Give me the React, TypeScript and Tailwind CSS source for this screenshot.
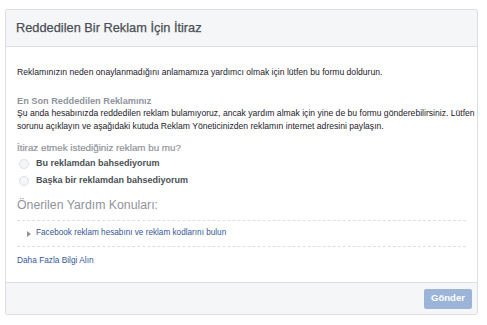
import React from "react";

export default function App() {
  return (
    <div className="w-[487px] h-[325px] bg-white pt-[9px] pl-[5px]" style={{ fontFamily: '"Liberation Sans", Arial, sans-serif' }}>
      <div className="w-[473px] border border-[#dddfe2] rounded-[2px] bg-white">
        <div className="h-[37px] bg-[#f5f6f7] border-b border-[#dddfe2] flex items-center pl-[10px]">
          <span className="text-[12.8px] font-normal text-[#4b4f56] [-webkit-text-stroke:0.25px_#4b4f56]">Reddedilen Bir Reklam İçin İtiraz</span>
        </div>
        <div className="px-[11px] pt-[19px] pb-[14px] h-[235px]">
          <p className="text-[8.6px] leading-[12px] text-[#1d2129]">
            Reklamınızın neden onaylanmadığını anlamamıza yardımcı olmak için lütfen bu formu doldurun.
          </p>
          <div className="mt-[17px] text-[9.2px] leading-[12px] font-bold text-[#90949c]">En Son Reddedilen Reklamınız</div>
          <p className="mt-[0px] mr-[-10px] text-[8.6px] leading-[13px] text-[#1d2129]">
            Şu anda hesabınızda reddedilen reklam bulamıyoruz, ancak yardım almak için yine de bu formu gönderebilirsiniz. Lütfen sorunu açıklayın ve aşağıdaki kutuda Reklam Yöneticinizden reklamın internet adresini paylaşın.
          </p>
          <div className="mt-[9px] text-[9.8px] leading-[12px] font-normal text-[#90949c] [-webkit-text-stroke:0.2px_#90949c]">İtiraz etmek istediğiniz reklam bu mu?</div>
          <div className="mt-[3px] flex flex-col gap-[4px]">
            {["Bu reklamdan bahsediyorum", "Başka bir reklamdan bahsediyorum"].map((t) => (
              <label key={t} className="flex items-center gap-[7px] pl-[2px] h-[13px]">
                <span className="w-[10px] h-[10px] rounded-full border border-[#dddfe2] bg-[#f5f6f7]" />
                <span className="text-[9px] font-bold text-[#4b4f56]">{t}</span>
              </label>
            ))}
          </div>
          <div className="mt-[10px] text-[12.3px] leading-[16px] text-[#90949c]">Önerilen Yardım Konuları:</div>
          <div className="mt-[7px] border-t border-dashed border-[#dddfe2] w-[449px]" />
          <div className="h-[25px] flex items-center pl-[10px] gap-[5px]">
            <svg width="4" height="6" viewBox="0 0 4 6"><path d="M0 0 L4 3 L0 6 Z" fill="#90949c" /></svg>
            <span className="text-[8.2px] text-[#365899]">Facebook reklam hesabını ve reklam kodlarını bulun</span>
          </div>
          <div className="border-t border-dashed border-[#dddfe2] w-[449px]" />
          <div className="mt-[7px] text-[8.3px] leading-[12px] text-[#365899]">Daha Fazla Bilgi Alın</div>
        </div>
        <div className="h-[32px] bg-[#f5f6f7] border-t border-[#dddfe2] flex items-center justify-end pr-[5px]">
          <button className="w-[48px] h-[20px] rounded-[2px] bg-[#9cb4d8] text-white text-[9.5px] font-bold">Gönder</button>
        </div>
      </div>
    </div>
  );
}
